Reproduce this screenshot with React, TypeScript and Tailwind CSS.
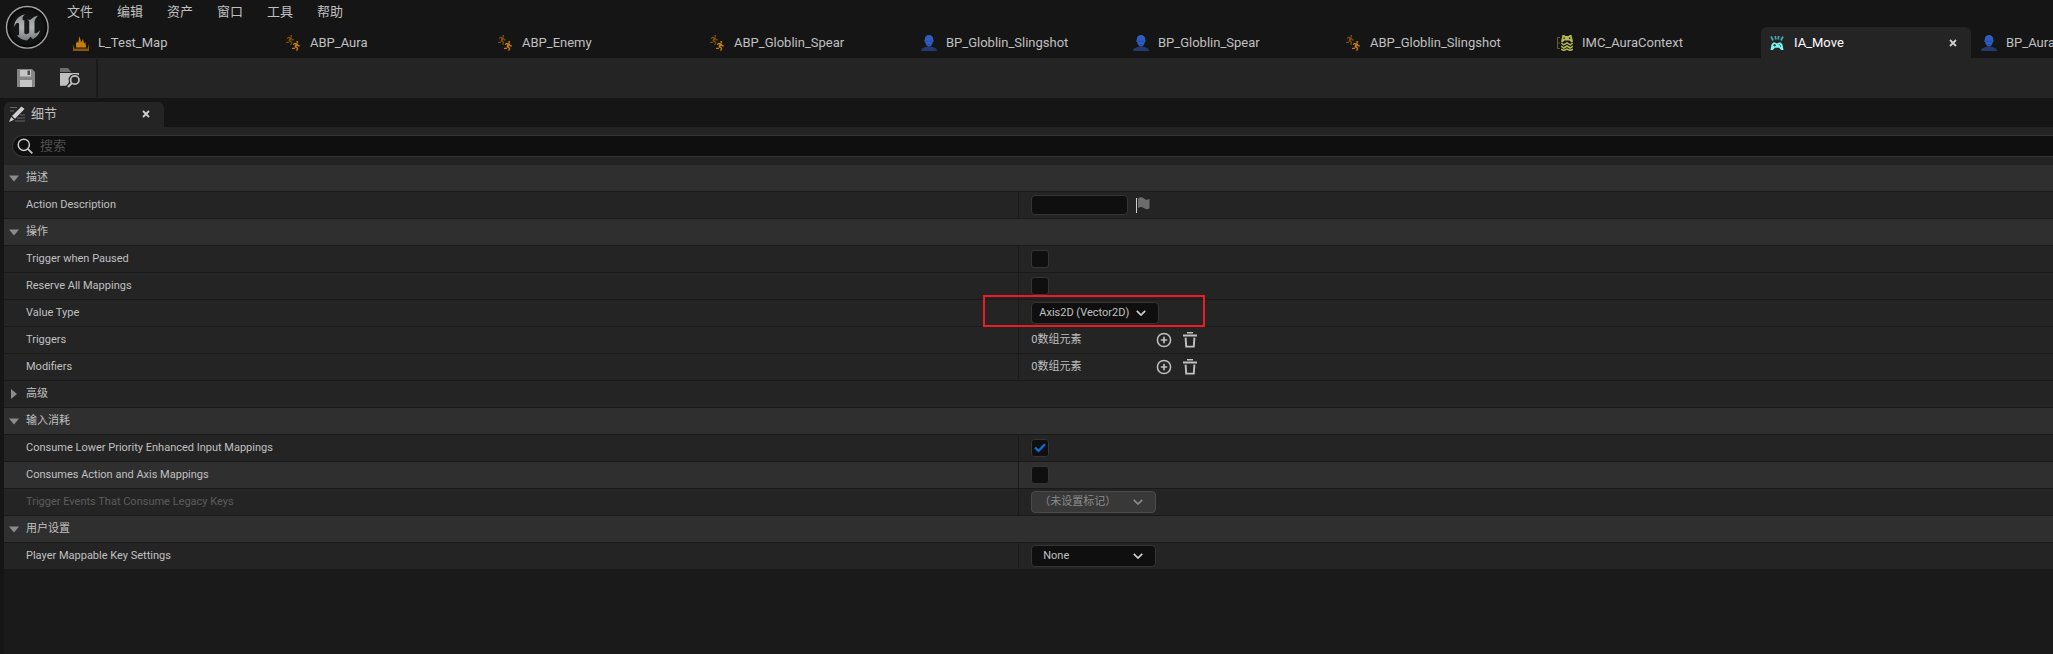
import React from "react";
import { FaRunning } from "react-icons/fa";

function UnrealLogo() {
  return (
    <svg viewBox="0 0 44 44" className="size-11" aria-label="Unreal Engine" role="img">
      <defs>
        <linearGradient id="metal" x1="0" y1="0" x2="0" y2="1">
          <stop offset="0" stopColor="#8b8f90" />
          <stop offset="0.5" stopColor="#b0b4b5" />
          <stop offset="1" stopColor="#747a7b" />
        </linearGradient>
        <radialGradient id="disc">
          <stop offset="0" stopColor="#1c1c1c" />
          <stop offset="0.8" stopColor="#121212" />
          <stop offset="1" stopColor="#020202" />
        </radialGradient>
      </defs>
      <circle cx="22.300" cy="22.300" r="20.800" fill="url(#disc)" stroke="#a3a5a5" strokeWidth="1.400" />
      <path
        transform="translate(0.8 0.8) scale(1.79)"
        fill="url(#metal)"
        d="M19.13 13.729c-.206.997-1.126 3.557-4.06 4.942l-1.179-1.325-1.988 2a7.338 7.338 0 01-5.804-2.978 2.859 2.859 0 00.65.123c.326.006.678-.114.678-.66v-5.394a.89.89 0 00-1.116-.89c-.92.212-1.656 2.509-1.656 2.509a7.304 7.304 0 012.528-5.597 7.408 7.408 0 013.73-1.721c-1.006.573-1.57 1.507-1.57 2.29 0 1.262.76 1.109.984.923v7.28a1.157 1.157 0 00.148.256 1.075 1.075 0 00.88.445c.76 0 1.747-.868 1.747-.868V9.172c0-.6-.452-1.324-.905-1.572 0 0 .838.149 1.484.346a5.537 5.537 0 01.387-.425c1.508-1.48 2.929-1.902 4.112-2.112 0 0-2.151 1.69-2.151 3.96 0 1.687.043 5.801.043 5.801.799.771 1.986-.342 3.059-1.441Z"
      />
    </svg>
  );
}

function LevelIcon() {
  return (
    <svg viewBox="0 0 16 16" className="size-4 shrink-0">
      <path fill="#8a560b" d="M0 9l1.200 3.500V13.500H0ZM16 9l-1.200 3.500V13.500H16ZM0 13.500h16V16H0Z" />
      <path fill="#c87e0c" d="M3 12.600V8.500L4.200 6.500 5.300 8 6.300 1 8.300 7.500 10 3.800 11 8.500 12.300 7 13.200 12.600Z" />
    </svg>
  );
}

function AnimIcon() {
  return (
    <svg viewBox="0 0 16 16" className="size-4 shrink-0">
      <FaRunning x={0} y={0} size={10} color="#7a4d10" />
      <FaRunning x={6} y={6} size={10} color="#cf8212" />
    </svg>
  );
}

function PawnIcon() {
  return (
    <svg viewBox="0 0 16 16" className="size-4 shrink-0">
      <path fill="#213a70" d="M0 16c0-2.600 2-3.400 5.200-4.300h5.600C14 12.600 16 13.400 16 16Z" />
      <path fill="#2f5cc0" d="M8 0c2.700 0 4.200 1.700 4.200 4.200 0 .8.500 1 .4 1.900-.1.700-.6.900-.9 1.300C11.200 9.800 9.600 11.600 8 11.600S4.800 9.800 4.300 7.400c-.3-.4-.8-.6-.9-1.300-.1-.9.4-1.100.4-1.900C3.800 1.700 5.300 0 8 0Z" />
      <path fill="#1f3f8c" d="M5.400 5.800h1.800v1H5.400ZM8.800 5.800h1.800v1H8.800ZM6.900 9h2.200v.8H6.900Z" />
    </svg>
  );
}

function MappingIcon() {
  return (
    <svg viewBox="0 0 16 16" className="size-4 shrink-0">
      <path fill="none" stroke="#5f6030" d="M3 2.500H.5v11H3M.5 8H3" />
      <path fill="#b5b750" d="M5.500 0h2l.8 1h3.400l.8-1h2L16 6.500 14.500 7.500 12.500 5.500H7.500L5.500 7.500 4 6.500Z" />
      <path fill="none" stroke="#b5b750" strokeWidth="1.500" d="M4.200 8l2.600 1.800L10 7.800l3.200 2L15.800 8M4.200 11.200l2.600 1.800L10 11l3.200 2 2.600-1.800M4.200 14.200l2.600 1.300L10 14l3.200 1.500 2.600-1.300" />
      <path fill="#161616" d="M6.500 2.500h1.200v1.600H6.500ZM12 2.500h1.300v1.600H12Z" />
    </svg>
  );
}

function InputActionIcon() {
  return (
    <svg viewBox="0 0 16 16" className="size-4 shrink-0">
      <path fill="none" stroke="#3fb0ad" strokeWidth="1.700" d="M2 1.500l2.200 4M14 1.500l-2.200 4M6.300 1l.5 3.500M9.700 1l-.5 3.500" />
      <path fill="#7df3ef" d="M4.200 7.500h2l.8.8h2l.8-.8h2l1.700 2L14.500 15h-2.300L10 12.700H6L3.800 15H1.500l1-5.500Z" />
      <path fill="#1f2a2a" d="M4.300 9.800h.9v-.9h.9v.9H7v.9h-.9v.9h-.9v-.9h-.9ZM9.800 9.200h1v1h-1ZM11 10.500h1v1h-1Z" />
    </svg>
  );
}

function DetailsIcon() {
  return (
    <svg viewBox="0 0 16 16" className="size-4 shrink-0">
      <path stroke="#666" strokeWidth="1.200" d="M1 1.500h7M1 5h4M11 9h5M8 12h8M6 15h10" />
      <path fill="#d0d0d0" d="M12.500 0.500L15.500 3 6 12.800 3 10Z" />
      <path fill="#d0d0d0" d="M2.200 10.900l2.900 2.800L0 16Z" />
    </svg>
  );
}

function SaveIcon() {
  return (
    <svg viewBox="0 0 18 18" className="size-[18px]">
      <path fill="#858585" d="M0 0h15l3 3v15H0Z" />
      <path fill="#c6c6c6" d="M3 1h11v6.500H3ZM3 11h12v7H3Z" />
      <path fill="#4c4c4c" d="M10.500 1.500h2.500v4.500h-2.500Z" />
    </svg>
  );
}

function BrowseIcon() {
  return (
    <svg viewBox="0 0 20 20" className="size-5">
      <path fill="#6d6d6d" d="M0 0h8l3 4H0Z" />
      <path fill="#c0c0c0" d="M0 5h19v2.500H0ZM0 5h13v3a6 6 0 0 0-4 6l-2 3.700H0Z" />
      <circle cx="14.800" cy="12" r="6.200" fill="#242424" />
      <path stroke="#c0c0c0" strokeWidth="1.200" d="M11 5.600h8" />
      <path stroke="#242424" strokeWidth="4.500" d="M12 15l-4.500 4.500" />
      <circle cx="14.800" cy="12" r="4.200" fill="none" stroke="#c0c0c0" strokeWidth="1.700" />
      <path stroke="#c0c0c0" strokeWidth="2" d="M12 15l-4 4" />
    </svg>
  );
}

function CloseIcon() {
  return (
    <svg viewBox="0 0 8 8" className="size-2">
      <path stroke="#d0d0d0" strokeWidth="1.800" d="M1 1l6 6M7 1L1 7" />
    </svg>
  );
}

function Chevron() {
  return (
    <svg viewBox="0 0 10 6" className="h-1.5 w-2.5">
      <path fill="none" stroke="currentColor" strokeWidth="1.700" d="M0.800 0.800L5 5 9.200 0.800" />
    </svg>
  );
}

const menus = ["文件", "编辑", "资产", "窗口", "工具", "帮助"];

const tabs = [
  { name: "L_Test_Map", Icon: LevelIcon },
  { name: "ABP_Aura", Icon: AnimIcon },
  { name: "ABP_Enemy", Icon: AnimIcon },
  { name: "ABP_Globlin_Spear", Icon: AnimIcon },
  { name: "BP_Globlin_Slingshot", Icon: PawnIcon },
  { name: "BP_Globlin_Spear", Icon: PawnIcon },
  { name: "ABP_Globlin_Slingshot", Icon: AnimIcon },
  { name: "IMC_AuraContext", Icon: MappingIcon },
  { name: "IA_Move", Icon: InputActionIcon, active: true },
  { name: "BP_Aura", Icon: PawnIcon },
];

function Header() {
  return (
    <header className="flex bg-[#151515]">
      <div className="w-[65px] shrink-0 pt-[5px] pl-[5px]">
        <UnrealLogo />
      </div>
      <div className="min-w-0 flex-1">
        <nav className="flex h-[27px] gap-6 pb-1 pl-0.5">
          {menus.map((m) => (
            <button key={m} type="button" className="text-[13px] leading-none">
              {m}
            </button>
          ))}
        </nav>
        <div className="flex gap-0.5 overflow-hidden">
          {tabs.map(({ name, Icon, active }) => (
            <div
              key={name}
              className={
                active
                  ? "flex h-[31px] w-[210px] shrink-0 items-center rounded-t-md bg-[#242424] pr-3.5 pl-2 text-white"
                  : "flex h-[31px] w-[210px] shrink-0 items-center pr-3.5 pl-2"
              }
            >
              <button type="button" className="flex flex-1 items-center gap-[9px] text-[13px] leading-4">
                <Icon />
                {name}
              </button>
              {active && (
                <button type="button" aria-label="Close">
                  <CloseIcon />
                </button>
              )}
            </div>
          ))}
        </div>
      </div>
    </header>
  );
}

function SectionRow({ title, closed }: { title: string; closed?: boolean }) {
  return (
    <button
      type="button"
      className={
        closed
          ? "flex h-[27px] w-full items-center gap-1.5 border-b border-[#1a1a1a] bg-[#242424] pl-1 text-left"
          : "flex h-[27px] w-full items-center gap-1.5 border-b border-[#1a1a1a] bg-[#2f2f2f] pl-1 text-left"
      }
    >
      <svg viewBox="0 0 12 12" className="size-3">
        <path fill="#8c8c8c" d={closed ? "M3 1v10l6-5Z" : "M1 3.500h10L6 9.500Z"} />
      </svg>
      {title}
    </button>
  );
}

type RowProps = { label: string; id?: string; hovered?: boolean; disabled?: boolean; children: React.ReactNode };

function PropertyRow({ label, id, hovered, disabled, children }: RowProps) {
  return (
    <div
      className={
        hovered
          ? "grid h-[27px] grid-cols-[99fr_101fr] border-b border-[#1a1a1a] bg-[#2f2f2f]"
          : "grid h-[27px] grid-cols-[99fr_101fr] border-b border-[#1a1a1a] bg-[#242424]"
      }
    >
      <div className={disabled ? "flex items-center pl-[22px] text-[#5c5c5c]" : "flex items-center pl-[22px]"}>
        {id ? <label htmlFor={id}>{label}</label> : <span>{label}</span>}
      </div>
      <div className="relative flex items-center border-l border-[#1a1a1a] pl-3">{children}</div>
    </div>
  );
}

function Checkbox({ id, checked }: { id: string; checked?: boolean }) {
  return (
    <span className="grid size-[18px] place-items-center *:col-start-1 *:row-start-1">
      <input
        id={id}
        type="checkbox"
        defaultChecked={checked}
        className="peer size-[18px] appearance-none rounded-[3px] border border-[#353535] bg-[#0f0f0f]"
      />
      <svg viewBox="0 0 12 10" className="pointer-events-none invisible h-2.5 w-3 peer-checked:visible">
        <path fill="none" stroke="#0a70e0" strokeWidth="2.200" d="M1 4.500L4.500 8 11 1.200" />
      </svg>
    </span>
  );
}

function Select({ id, value, wide, disabled }: { id: string; value: string; wide?: boolean; disabled?: boolean }) {
  return (
    <span className={wide ? "relative w-32" : "relative w-[125px]"}>
      <select
        id={id}
        disabled={disabled}
        className={
          disabled
            ? "block h-[22px] w-full appearance-none rounded border border-[#4a4a4a] bg-[#383838] pl-[7px] text-[#8a8a8a]"
            : wide
              ? "block h-[22px] w-full appearance-none rounded border border-[#353535] bg-[#0f0f0f] pl-[7px]"
              : "block h-[22px] w-full appearance-none rounded border border-[#353535] bg-[#0f0f0f] pl-[11px]"
        }
      >
        <option>{value}</option>
      </select>
      <span
        className={
          disabled
            ? "pointer-events-none absolute inset-y-0 right-[13px] flex items-center text-[#8a8a8a]"
            : "pointer-events-none absolute inset-y-0 right-[13px] flex items-center text-[#d0d0d0]"
        }
      >
        <Chevron />
      </span>
    </span>
  );
}

function ArrayControls() {
  return (
    <>
      <span className="w-[125px]">0数组元素</span>
      <button type="button" aria-label="Add element">
        <svg viewBox="0 0 16 16" className="size-4">
          <circle cx="8" cy="8" r="6.600" fill="none" stroke="#c0c0c0" strokeWidth="1.500" />
          <path stroke="#c0c0c0" strokeWidth="1.700" d="M8 4.800v6.400M4.800 8h6.400" />
        </svg>
      </button>
      <button type="button" aria-label="Remove all elements" className="ml-2.5">
        <svg viewBox="0 0 16 16" className="size-4">
          <path fill="#c0c0c0" d="M5 0h6v1.400H5ZM1 2.600h14v1.800H1Z" />
          <path fill="none" stroke="#c0c0c0" strokeWidth="1.900" d="M3.600 5.600l.6 9h7.600l.6-9" />
        </svg>
      </button>
    </>
  );
}

export default function App() {
  return (
    <div className="flex min-h-screen flex-col overflow-hidden bg-[#151515] font-['Roboto','Noto_Sans_CJK_SC',sans-serif] text-[11px] leading-4 text-[#c0c0c0]">
      <Header />
      <div className="flex h-10 items-center bg-[#242424] pl-[17px]">
        <button type="button" aria-label="Save">
          <SaveIcon />
        </button>
        <button type="button" aria-label="Browse" className="ml-[25px]">
          <BrowseIcon />
        </button>
        <div className="ml-4 h-[38px] w-0.5 bg-[#1a1a1a]" />
      </div>
      <main className="flex flex-1 flex-col pt-1 pl-1">
        <div className="flex h-[25px] w-40 items-center rounded-t-md bg-[#242424] pr-3.5 pb-0.5 pl-[5px]">
          <button type="button" className="flex flex-1 items-center gap-1.5 text-[13px] leading-4">
            <DetailsIcon />
            细节
          </button>
          <button type="button" aria-label="Close">
            <CloseIcon />
          </button>
        </div>
        <div className="bg-[#242424] py-2 pl-2">
          <label className="flex h-[22px] items-center gap-[7px] rounded-l-full border border-r-0 border-[#353535] bg-[#0f0f0f] pl-1">
            <svg viewBox="0 0 16 16" className="size-4 shrink-0">
              <circle cx="6.800" cy="6.800" r="5.600" fill="none" stroke="#c8c8c8" strokeWidth="1.500" />
              <path stroke="#c8c8c8" strokeWidth="1.800" d="M10.800 10.800l4.500 4.500" />
            </svg>
            <input
              type="text"
              placeholder="搜索"
              aria-label="搜索"
              className="h-5 min-w-0 flex-1 bg-transparent pb-0.5 text-[13px] outline-none placeholder:text-[#4e4e4e]"
            />
          </label>
        </div>
        <div className="flex-1 bg-[#1a1a1a]">
          <SectionRow title="描述" />
          <PropertyRow label="Action Description" id="desc">
            <input id="desc" type="text" className="h-5 w-[97px] rounded border border-[#353535] bg-[#0f0f0f] px-2" />
            <svg viewBox="0 0 14 16" className="ml-2 h-4 w-3.5">
              <path fill="#d0d0d0" d="M0 1h1v15H0Z" />
              <path fill="#6c6c6c" d="M2 1.500C4-.2 6-.2 8 1.500s3.500 1.500 5.500.3v9.400c-2 1.300-3.800 1.300-5.700-.2s-3.800-1.500-5.800.3Z" />
            </svg>
          </PropertyRow>
          <SectionRow title="操作" />
          <PropertyRow label="Trigger when Paused" id="paused">
            <Checkbox id="paused" />
          </PropertyRow>
          <PropertyRow label="Reserve All Mappings" id="reserve">
            <Checkbox id="reserve" />
          </PropertyRow>
          <PropertyRow label="Value Type" id="valuetype">
            <Select id="valuetype" value="Axis2D (Vector2D)" wide />
            <div className="pointer-events-none absolute -top-[5px] -left-9 z-10 h-8 w-[222px] border-2 border-[#ec1c24]" />
          </PropertyRow>
          <PropertyRow label="Triggers">
            <ArrayControls />
          </PropertyRow>
          <PropertyRow label="Modifiers">
            <ArrayControls />
          </PropertyRow>
          <SectionRow title="高级" closed />
          <SectionRow title="输入消耗" />
          <PropertyRow label="Consume Lower Priority Enhanced Input Mappings" id="consume">
            <Checkbox id="consume" checked />
          </PropertyRow>
          <PropertyRow label="Consumes Action and Axis Mappings" id="axis" hovered>
            <Checkbox id="axis" />
          </PropertyRow>
          <PropertyRow label="Trigger Events That Consume Legacy Keys" id="legacy" disabled>
            <Select id="legacy" value="（未设置标记）" disabled />
          </PropertyRow>
          <SectionRow title="用户设置" />
          <PropertyRow label="Player Mappable Key Settings" id="keys">
            <Select id="keys" value="None" />
          </PropertyRow>
        </div>
      </main>
    </div>
  );
}
